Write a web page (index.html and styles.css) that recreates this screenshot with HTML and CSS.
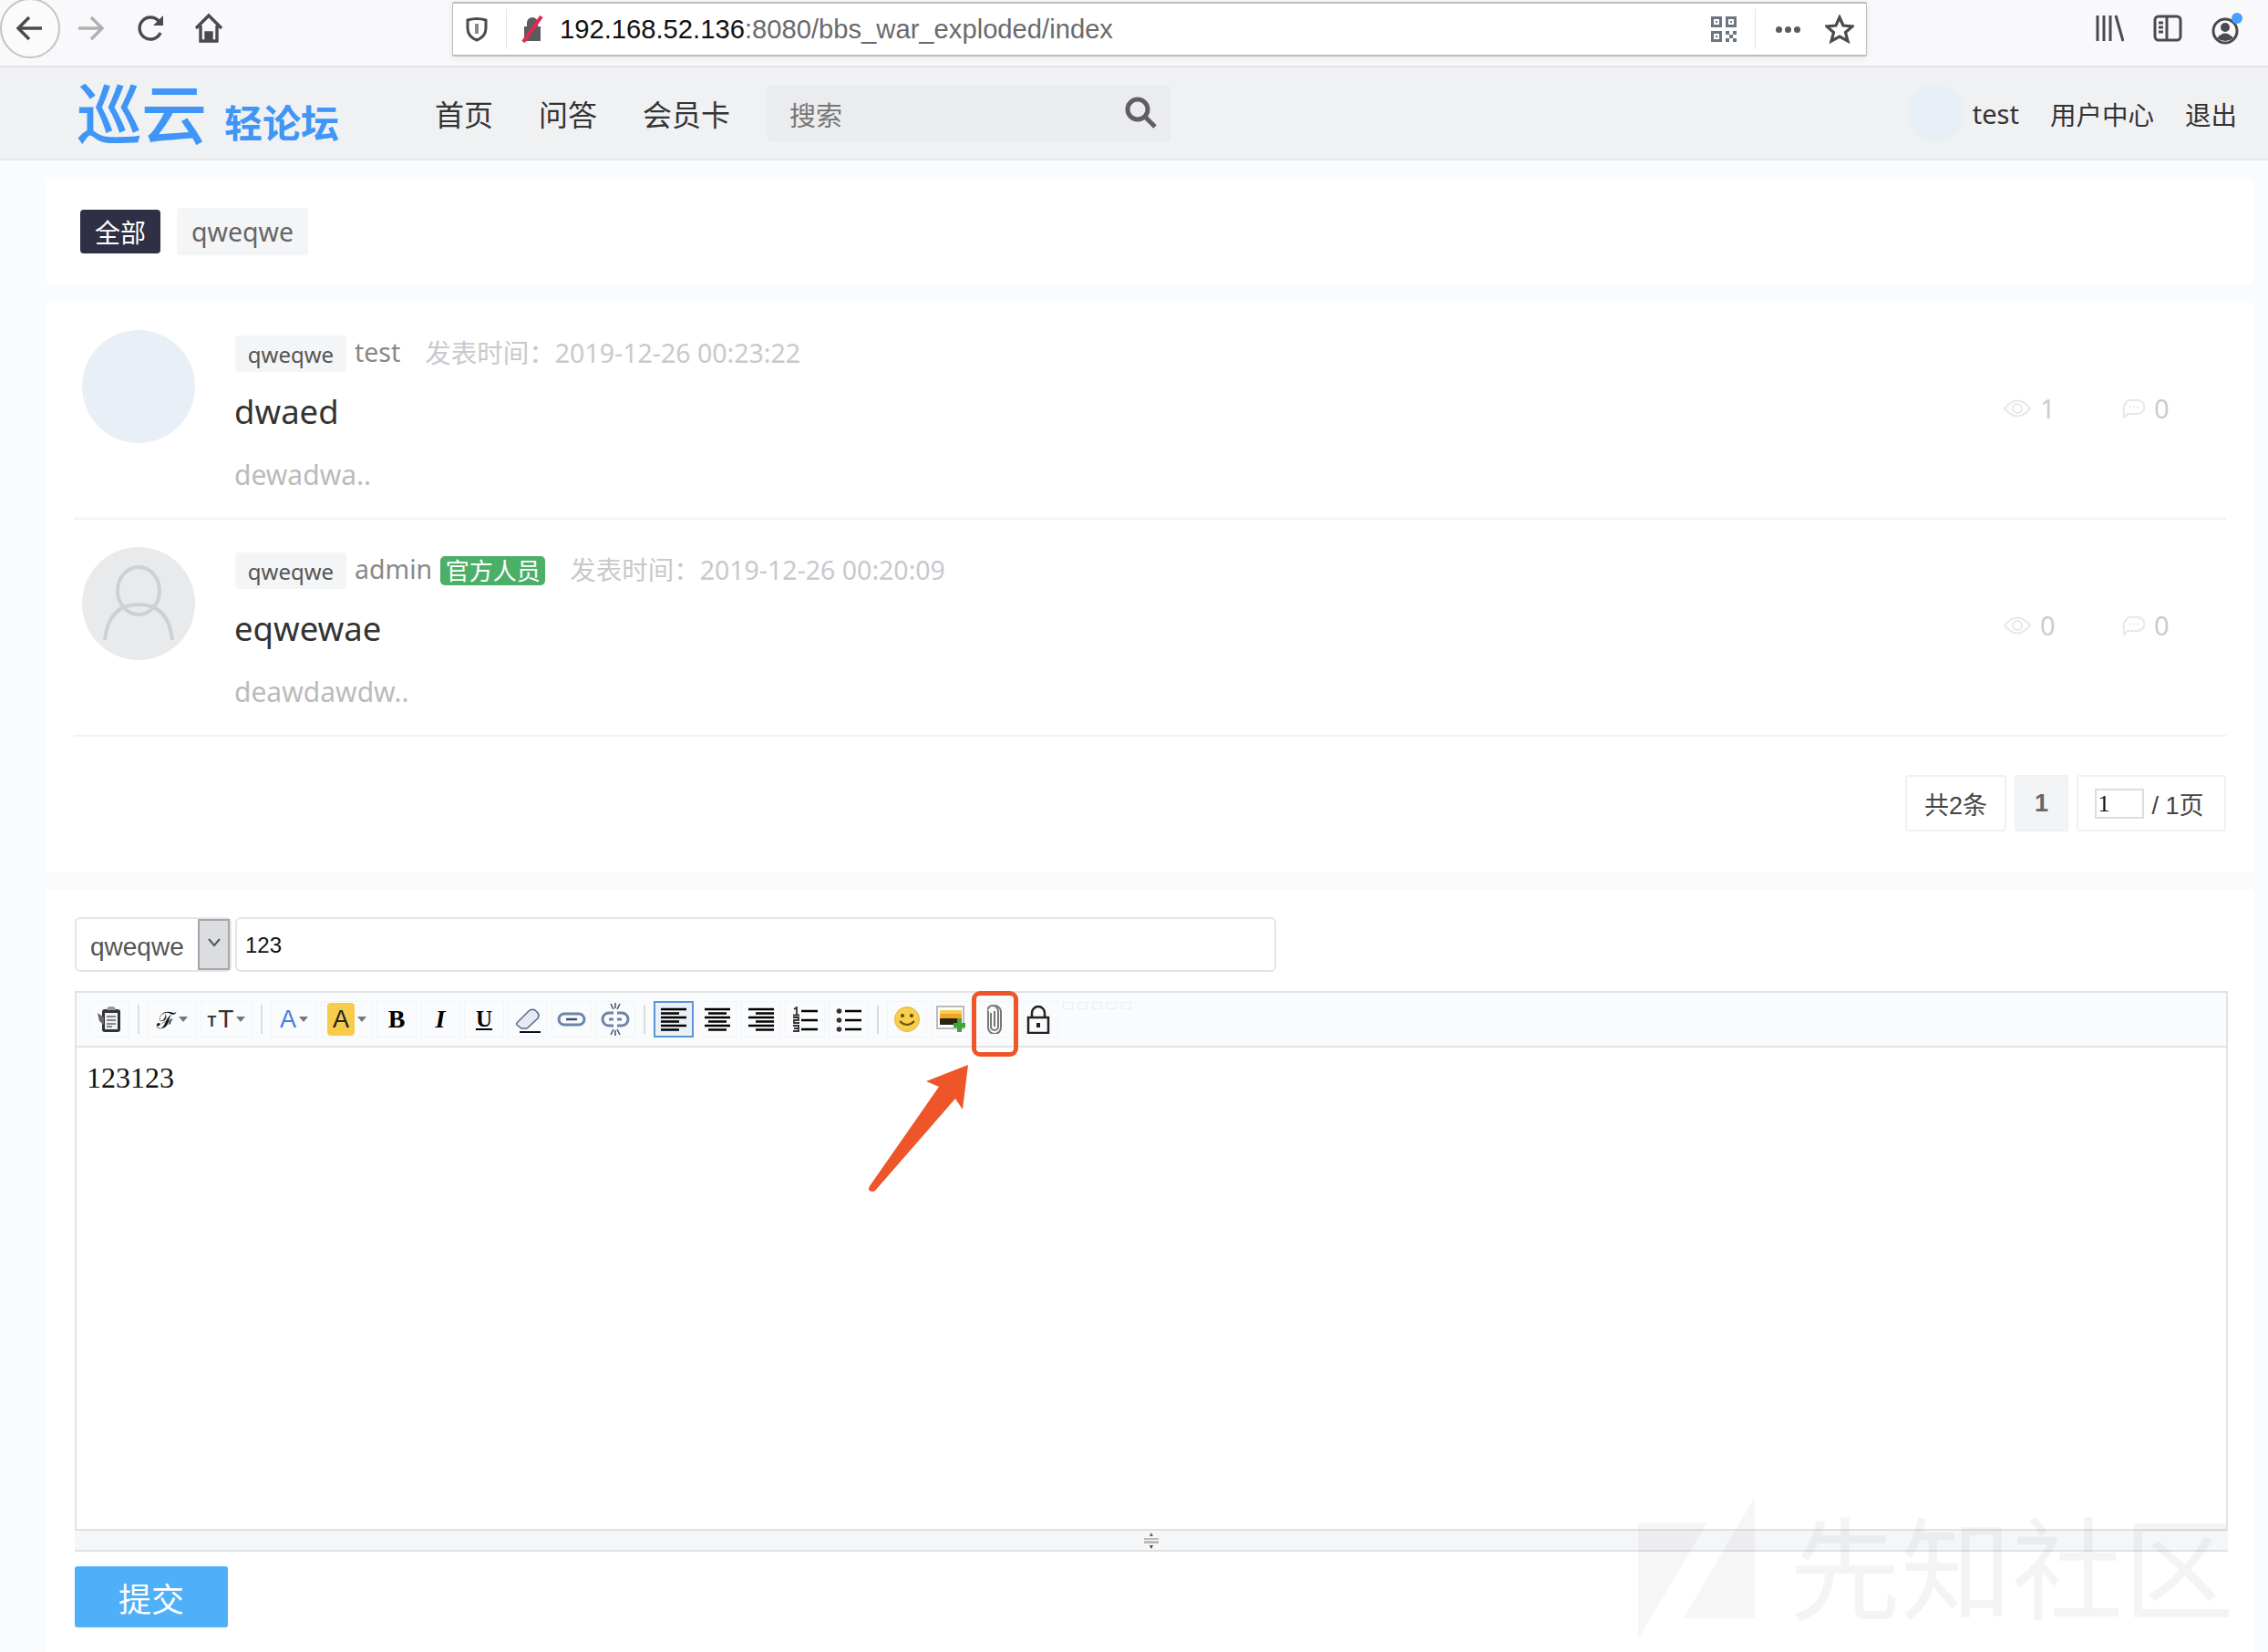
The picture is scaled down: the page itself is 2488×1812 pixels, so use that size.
FILE: index.html
```html
<!DOCTYPE html>
<html lang="zh-CN">
<head>
    <meta charset="UTF-8">
    <title>bbs index</title>
    <link rel="stylesheet" href="styles.css">
</head>
<body>
    <!-- browser chrome -->
    <div class="browser">
        <div class="back-btn">
            <svg width="34" height="34" viewBox="0 0 34 34" fill="none" stroke="#4a4a4f" stroke-width="3.4"><path d="M30 17H5M16 5L4 17l12 12"/></svg>
        </div>
        <svg class="fwd" width="34" height="34" viewBox="0 0 34 34" fill="none" stroke="#b1b1b3" stroke-width="3.4"><path d="M4 17h25M18 5l12 12-12 12"/></svg>
        <svg class="reload" width="32" height="34" viewBox="0 0 32 34" fill="none" stroke="#4a4a4f" stroke-width="3.4"><path d="M26 22a12 12 0 1 1-2-13l4 4"/><path d="M29 3v11H18" fill="#4a4a4f" stroke="none"/></svg>
        <svg class="home" width="32" height="34" viewBox="0 0 32 34" fill="none" stroke="#4a4a4f" stroke-width="3.4"><path d="M2 17L16 3l14 14M7 14v17h18V14"/><path d="M13 31v-9h6v9" fill="#4a4a4f"/></svg>
        <div class="urlbar">
            <svg class="shield" width="26" height="28" viewBox="0 0 26 28" fill="none" stroke="#4a4a4f" stroke-width="3"><path d="M3 4q10-3 20 0v9q0 9-10 13Q3 22 3 13z"/><path d="M13 8v11" stroke-width="4" stroke="#8a8a8e"/></svg>
            <i class="url-sep"></i>
            <svg class="nolock" width="28" height="30" viewBox="0 0 28 30"><path d="M8 12V8a6 6 0 0 1 12 0v4h3v16H5V12z" fill="#5c5c60"/><path d="M24 1L4 29" stroke="#e22850" stroke-width="4"/></svg>
            <div class="url"><b>192.168.52.136</b>:8080/bbs_war_exploded/index</div>
            <svg class="qr" width="30" height="30" viewBox="0 0 30 30" fill="#6d7680"><path d="M1 1h12v12H1zm3 3v6h6V4zM17 1h12v12H17zm3 3v6h6V4zM1 17h12v12H1zm3 3v6h6v-6z" fill-rule="evenodd"/><path d="M17 17h4v4h-4zM25 17h4v4h-4zM21 21h4v4h-4zM17 25h4v4h-4zM25 25h4v4h-4zM6 6h2v2H6zM22 6h2v2h-2zM6 22h2v2H6z"/></svg>
            <i class="url-sep url-sep-right"></i>
            <div class="dots"><i></i><i></i><i></i></div>
            <svg class="star" width="32" height="32" viewBox="0 0 32 32" fill="none" stroke="#4a4a4f" stroke-width="3.2"><path d="M16 3l4 9 10 1-7.5 6.6L25 29l-9-5-9 5 2.500-9.400L2 13l10-1z"/></svg>
        </div>
        <div class="browser-right">
            <svg width="32" height="30" viewBox="0 0 32 30" fill="none" stroke="#4a4a4f" stroke-width="3"><path d="M3 1v28M10 1v28M17 1v28M23 1l8 28"/></svg>
            <svg width="32" height="30" viewBox="0 0 32 30" fill="none" stroke="#4a4a4f" stroke-width="3"><rect x="2" y="2" width="28" height="26" rx="4"/><path d="M15 2v26M6 9h5M6 14h5M6 19h5"/></svg>
            <svg width="34" height="36" viewBox="0 0 34 36"><circle cx="15" cy="21" r="13" fill="none" stroke="#4a4a4f" stroke-width="3"/><circle cx="15" cy="17" r="5" fill="#4a4a4f"/><path d="M6 29q9-11 18 0q-9 6-18 0" fill="#4a4a4f"/><circle cx="28" cy="7" r="6" fill="#45a1ff"/></svg>
        </div>
    </div>

    <!-- site nav -->
    <div class="nav">
        <div class="logo"><span class="logo-big">巡云</span><span class="logo-small">轻论坛</span></div>
        <a class="nav-link">首页</a>
        <a class="nav-link">问答</a>
        <a class="nav-link">会员卡</a>
        <div class="search">
            <span>搜索</span>
            <svg width="36" height="36" viewBox="0 0 36 36" fill="none" stroke="#5f5f62" stroke-width="5"><circle cx="15" cy="15" r="11"/><path d="M23 23l11 11"/></svg>
        </div>
        <div class="nav-right">
            <div class="nav-avatar"></div>
            <a class="nav-user">test</a>
            <a class="nav-center">用户中心</a>
            <a class="nav-out">退出</a>
        </div>
    </div>

    <div class="main">
        <div class="card tags">
            <span class="tag-all">全部</span>
            <span class="tag-item">qweqwe</span>
        </div>

        <div class="card topics">
            <div class="topic">
                <div class="avatar"></div>
                <div class="topic-body">
                    <div class="meta">
                        <span class="cat">qweqwe</span>
                        <span class="author">test</span>
                        <span class="time">发表时间：2019-12-26 00:23:22</span>
                    </div>
                    <div class="title">dwaed</div>
                    <div class="desc">dewadwa..</div>
                </div>
                <div class="stats">
                    <div class="stat">
                        <svg width="30" height="20" viewBox="0 0 30 20" fill="none" stroke="#e8e8ea" stroke-width="2"><path d="M1 10q14-17 28 0q-14 17-28 0z"/><circle cx="15" cy="10" r="5"/></svg>
                        <span>1</span>
                    </div>
                    <div class="stat">
                        <svg width="26" height="22" viewBox="0 0 26 22" fill="none" stroke="#e8e8ea" stroke-width="2"><path d="M8 2h10a7 7 0 0 1 0 15H7l-4 4v-7Q1 8 8 2z"/><path d="M9 9.500h2M13 9.500h2M17 9.500h2"/></svg>
                        <span>0</span>
                    </div>
                </div>
            </div>
            <div class="topic">
                <div class="avatar avatar-default">
                    <svg width="124" height="124" viewBox="0 0 124 124" fill="none" stroke="#cfd0d2" stroke-width="4"><ellipse cx="62" cy="48" rx="23" ry="26"/><path d="M25 102q4-39 37-39t37 39"/></svg>
                </div>
                <div class="topic-body">
                    <div class="meta">
                        <span class="cat">qweqwe</span>
                        <span class="author">admin</span>
                        <span class="badge">官方人员</span>
                        <span class="time">发表时间：2019-12-26 00:20:09</span>
                    </div>
                    <div class="title">eqwewae</div>
                    <div class="desc">deawdawdw..</div>
                </div>
                <div class="stats">
                    <div class="stat">
                        <svg width="30" height="20" viewBox="0 0 30 20" fill="none" stroke="#e8e8ea" stroke-width="2"><path d="M1 10q14-17 28 0q-14 17-28 0z"/><circle cx="15" cy="10" r="5"/></svg>
                        <span>0</span>
                    </div>
                    <div class="stat">
                        <svg width="26" height="22" viewBox="0 0 26 22" fill="none" stroke="#e8e8ea" stroke-width="2"><path d="M8 2h10a7 7 0 0 1 0 15H7l-4 4v-7Q1 8 8 2z"/><path d="M9 9.500h2M13 9.500h2M17 9.500h2"/></svg>
                        <span>0</span>
                    </div>
                </div>
            </div>
            <div class="pager">
                <span class="page-box page-total">共2条</span>
                <span class="page-box page-current">1</span>
                <span class="page-box page-jump"><span class="page-input">1</span>/ 1页</span>
            </div>
        </div>

        <div class="card post">
            <div class="post-row">
                <div class="select">
                    <span>qweqwe</span>
                    <div class="select-btn"><svg width="16" height="10" viewBox="0 0 16 10" fill="none" stroke="#555" stroke-width="2"><path d="M2 1l6 7 6-7"/></svg></div>
                </div>
                <div class="title-input">123</div>
            </div>
            <div class="editor">
                <div class="toolbar">
                    <div class="tb">
                        <svg width="28" height="30" viewBox="0 0 28 30"><rect x="6" y="4" width="20" height="25" rx="3" fill="#333"/><rect x="9" y="8" width="14" height="18" fill="#eef1f4"/><path d="M11 12h10M11 16h10M11 20h10M11 23h6" stroke="#667" stroke-width="1.500"/><path d="M11 5q0-4 4-4h2q4 0 4 4" fill="#999"/><path d="M1 8l7 5v8L3 17z" fill="#666"/></svg>
                    </div>
                    <i class="tb-sep"></i>
                    <div class="tb tb-wide"><span class="t-font">ℱ</span><i class="caret"></i></div>
                    <div class="tb tb-wider"><span class="t-small">T</span><span class="t-big">T</span><i class="caret"></i></div>
                    <i class="tb-sep"></i>
                    <div class="tb tb-color"><span class="t-a t-blue">A</span><i class="caret"></i></div>
                    <div class="tb tb-wider"><span class="t-a t-hl">A</span><i class="caret"></i></div>
                    <div class="tb"><b class="t-b">B</b></div>
                    <div class="tb"><b class="t-i">I</b></div>
                    <div class="tb"><b class="t-u">U</b></div>
                    <div class="tb">
                        <svg width="30" height="30" viewBox="0 0 30 30"><path d="M3 19L16 6q3-3 7-1l3 3q2 3 0 6L14 25H8l-5-4q-1-1 0-2z" fill="#e6ebf3" stroke="#55688a" stroke-width="1.500"/><path d="M6 29h23" stroke="#111" stroke-width="2"/></svg>
                    </div>
                    <div class="tb">
                        <svg width="32" height="16" viewBox="0 0 32 16" fill="none" stroke="#6c85a8" stroke-width="3"><rect x="2" y="2" width="28" height="12" rx="6"/><path d="M10 8h12" stroke="#3e5270" stroke-width="2.500"/></svg>
                    </div>
                    <div class="tb">
                        <svg width="32" height="36" viewBox="0 0 32 36" fill="none" stroke="#6c85a8" stroke-width="3"><path d="M14 11H9a7 7 0 0 0 0 14h5M18 11h5a7 7 0 0 1 0 14h-5M9 18h5M18 18h5"/><path d="M11 1l3 6M21 1l-3 6M16 0v6M11 35l3-6M21 35l-3-6M16 36v-6" stroke="#3e5270" stroke-width="1.500"/></svg>
                    </div>
                    <i class="tb-sep"></i>
                    <div class="tb tb-active"><svg width="28" height="26" viewBox="0 0 28 26" stroke="#000" stroke-width="2.500"><path d="M0 2h28M0 6.500h20M0 11h28M0 15.500h20M0 20h28M0 24.500h20"/></svg></div>
                    <div class="tb"><svg width="28" height="26" viewBox="0 0 28 26" stroke="#000" stroke-width="2.500"><path d="M0 2h28M4 6.500h20M0 11h28M4 15.500h20M0 20h28M4 24.500h20"/></svg></div>
                    <div class="tb"><svg width="28" height="26" viewBox="0 0 28 26" stroke="#000" stroke-width="2.500"><path d="M0 2h28M8 6.500h20M0 11h28M8 15.500h20M0 20h28M8 24.500h20"/></svg></div>
                    <div class="tb"><svg width="28" height="28" viewBox="0 0 28 28"><path d="M10 5h18M10 15h18M10 25h18" stroke="#000" stroke-width="2.500"/><path d="M2 3l3-2v8M1 9.500h7M1 12h6v3H2v3h6M1 21h6v3H2M7 24v3H1" fill="none" stroke="#333" stroke-width="1.800"/></svg></div>
                    <div class="tb"><svg width="28" height="28" viewBox="0 0 28 28"><path d="M10 5h18M10 15h18M10 25h18" stroke="#000" stroke-width="2.500"/><circle cx="3.500" cy="5" r="2.800" fill="#333"/><circle cx="3.500" cy="15" r="2.800" fill="#333"/><circle cx="3.500" cy="25" r="2.800" fill="#333"/></svg></div>
                    <i class="tb-sep"></i>
                    <div class="tb"><svg width="30" height="30" viewBox="0 0 30 30"><circle cx="15" cy="15" r="13.500" fill="#f7cf4d" stroke="#e3b23a"/><circle cx="10" cy="11" r="2" fill="#5a4210"/><circle cx="20" cy="11" r="2" fill="#5a4210"/><path d="M7 17q8 8 16 0" fill="none" stroke="#6b4f14" stroke-width="2"/></svg></div>
                    <div class="tb"><svg width="32" height="30" viewBox="0 0 32 30"><rect x="1" y="1" width="29" height="24" fill="#fff" stroke="#bbb" stroke-width="2"/><rect x="4" y="5" width="24" height="16" fill="#f0a428"/><path d="M4 14h24v7H4z" fill="#2d2410"/><path d="M4 5h24v4H4z" fill="#f7cf4d"/><path d="M23 14h5v5h4v5h-4v5h-5v-5h-4v-5h4z" fill="#3fa53a"/></svg></div>
                    <div class="tb"><svg width="16" height="32" viewBox="0 0 16 32" fill="none" stroke="#777" stroke-width="2"><path d="M4 9v15a4 4 0 0 0 8 0V7a6 6 0 0 0-12 0"/><path d="M1 7v18a7 7 0 0 0 14 0V7a7 7 0 0 0-7-6M8 7v17"/></svg></div>
                    <div class="tb"><svg width="26" height="32" viewBox="0 0 26 32" fill="none" stroke="#222" stroke-width="2.500"><path d="M6 14V9a7 7 0 0 1 14 0v5"/><rect x="2" y="14" width="22" height="17"/><path d="M13 20v5" stroke-width="4"/></svg></div>
                    <div class="tb-empty"><i></i><i></i><i></i><i></i><i></i></div>
                </div>
                <div class="editor-body">123123</div>
                <div class="editor-status">
                    <svg width="18" height="20" viewBox="0 0 18 20"><path d="M9 1l2 4H7z" fill="#666"/><path d="M1 7h16v6H1z" fill="#bbb"/><path d="M1 9.500h16" stroke="#fff"/><path d="M9 19l2-4H7z" fill="#444"/></svg>
                </div>
            </div>
            <button class="submit">提交</button>
        </div>
    </div>

    <!-- annotation drawn on the screenshot -->
    <div class="mark-box"></div>
    <svg class="mark-arrow" width="120" height="150" viewBox="0 0 120 150"><path d="M112 3L66 21 80 27 4 136q-2 4 0 5 3 2 6 0L98 40l8 12z" fill="#ee5528"/></svg>

    <!-- watermark -->
    <div class="watermark">
        <svg width="130" height="160" viewBox="0 0 130 160" fill="#8a8a8a"><path d="M0 30h76L0 158z"/><path d="M128 2v133H50z"/></svg>
        <span>先知社区</span>
    </div>
</body>
</html>
```

FILE: styles.css
```css
* {
    box-sizing: border-box;
}
html, body {
    margin: 0;
    height: 100%;
}
body {
    width: 2488px;
    height: 1812px;
    overflow: hidden;
    position: relative;
    background: #fafbfd;
    font-family: "Noto Sans", "Noto Sans CJK SC", sans-serif;
    color: #333;
}
i {
    font-style: normal;
}

/* browser chrome */
.browser {
    height: 74px;
    background: #f9f9fb;
    border-bottom: 2px solid #e3e4e6;
    display: flex;
    align-items: center;
    padding-bottom: 10px;
}
.back-btn {
    width: 66px;
    height: 66px;
    border: 2px solid #c4c4c6;
    border-radius: 50%;
    display: flex;
    align-items: center;
    justify-content: center;
    flex-shrink: 0;
    background: #fbfbfc;
}
.fwd {
    margin-left: 16px;
}
.reload {
    margin-left: 34px;
}
.home {
    margin-left: 31px;
}
.urlbar {
    width: 1552px;
    height: 60px;
    margin-left: 251px;
    margin-top: 2px;
    background: #fff;
    border: 1px solid #bcbcbe;
    border-top-width: 2px;
    border-bottom-width: 2px;
    border-radius: 2px;
    box-shadow: 0 2px 8px rgba(0, 0, 0, .07);
    display: flex;
    align-items: center;
    padding-left: 13px;
}
.url-sep {
    width: 1px;
    height: 44px;
    background: #e3e3e5;
    margin: 0 14px 0 19px;
}
.url-sep-right {
    margin: 0 22px 0 14px;
}
.url {
    margin-left: 16px;
    flex: 1;
    font-family: "Liberation Sans", sans-serif;
    font-size: 29.200px;
    color: #6a6a6d;
    white-space: nowrap;
}
.url b {
    font-weight: normal;
    color: #111;
}
.qr {
    margin-right: 5px;
}
.dots {
    display: flex;
    gap: 3px;
    margin-right: 27px;
}
.dots i {
    width: 7px;
    height: 7px;
    border-radius: 50%;
    background: #5b5b5f;
}
.star {
    margin-right: 13px;
}
.browser-right {
    margin-left: auto;
    display: flex;
    align-items: center;
    gap: 32px;
    margin-right: 28px;
}

/* site nav */
.nav {
    height: 102px;
    background: #f0f1f3;
    border-bottom: 2px solid #e5e6e8;
    display: flex;
    align-items: center;
    padding-left: 84px;
}
.logo {
    width: 393px;
    display: flex;
    align-items: flex-end;
    color: #3f96f7;
    white-space: nowrap;
    height: 66px;
    flex-shrink: 0;
}
.logo-big {
    font-size: 72px;
    line-height: 66px;
    letter-spacing: -1px;
    font-weight: 500;
}
.logo-small {
    font-size: 42px;
    line-height: 44px;
    font-weight: 700;
    margin-left: 20px;
}
.nav-link {
    font-size: 32px;
    color: #333;
    margin-right: 50px;
    white-space: nowrap;
}
.search {
    width: 442px;
    height: 61px;
    margin-left: -9px;
    background: #ebecee;
    border: 1px solid #e8e9eb;
    border-radius: 4px;
    display: flex;
    align-items: center;
    justify-content: space-between;
    padding: 2px 14px 0 23px;
    color: #777;
    font-size: 29px;
}
.search svg {
    margin-top: -4px;
}
.nav-right {
    margin-left: auto;
    display: flex;
    align-items: center;
    font-size: 29px;
    color: #333;
    padding-right: 34px;
    white-space: nowrap;
}
.nav-avatar {
    width: 63px;
    height: 64px;
    border-radius: 50%;
    background: #e9eff6;
    margin-right: 9px;
}
.nav-center {
    margin-left: 34px;
    font-size: 28.500px;
}
.nav-out {
    margin-left: 34px;
    font-size: 28.500px;
}

/* cards */
.main {
    padding: 20px 16px 0 51px;
    display: flex;
    flex-direction: column;
    gap: 20px;
}
.card {
    background: #fff;
    box-shadow: 0 1px 6px rgba(0, 0, 0, .012);
}
.tags {
    height: 116px;
    padding: 32px 0 0 37px;
    display: flex;
    align-items: flex-start;
    gap: 19px;
}
.tag-all {
    width: 88px;
    height: 48px;
    margin-top: 2px;
    background: #2f3045;
    color: #fff;
    border-radius: 4px;
    font-size: 28px;
    display: flex;
    align-items: center;
    justify-content: center;
}
.tag-item {
    width: 144px;
    height: 52px;
    background: #f4f5f7;
    border-radius: 4px;
    color: #666;
    font-size: 28.500px;
    display: flex;
    align-items: center;
    justify-content: center;
    margin-left: -1px;
}

.topics {
    height: 624px;
    padding: 0 30px;
}
.topic {
    height: 238px;
    display: flex;
    align-items: flex-start;
    padding-top: 30px;
    border-bottom: 2px solid #f1f2f4;
}
.avatar {
    width: 124px;
    height: 124px;
    margin-left: 9px;
    border-radius: 50%;
    background: #e9eff6;
    flex-shrink: 0;
}
.avatar-default {
    background: #e9eaec;
}
.avatar-default svg {
    display: block;
}
.topic-body {
    margin-left: 44px;
    flex: 1;
}
.meta {
    display: flex;
    align-items: center;
    height: 40px;
    margin-top: 6px;
    font-size: 28.500px;
    white-space: nowrap;
}
.cat {
    width: 122px;
    height: 40px;
    background: #f4f5f7;
    border-radius: 4px;
    color: #555;
    font-size: 24px;
    display: flex;
    align-items: center;
    justify-content: center;
    margin-right: 9px;
}
.author {
    color: #888;
    padding-bottom: 5px;
}
.badge {
    width: 115px;
    height: 32px;
    margin-left: 9px;
    background: #4caf68;
    color: #fff;
    border-radius: 5px;
    font-size: 26px;
    line-height: 32px;
    text-align: center;
}
.time {
    color: #c8c9cc;
    margin-left: 27px;
    padding-bottom: 5px;
}
.title {
    font-size: 36.500px;
    line-height: 50px;
    margin: 18px 0 0 -1px;
    color: #333;
}
.desc {
    font-size: 30px;
    line-height: 40px;
    margin: 25px 0 0 -1px;
    color: #bbb;
}
.stats {
    display: flex;
    gap: 14px;
    margin-top: 66px;
}
.stat {
    width: 115px;
    display: flex;
    align-items: center;
    gap: 10px;
    font-size: 29px;
    color: #ccc;
}

.pager {
    display: flex;
    justify-content: flex-end;
    gap: 9px;
    margin-top: 42px;
    font-size: 27px;
    color: #444;
}
.page-box {
    height: 62px;
    border: 2px solid #f0f1f3;
    border-radius: 3px;
    display: flex;
    align-items: center;
    justify-content: center;
    font-family: "Liberation Sans", "Noto Sans CJK SC", sans-serif;
}
.page-total {
    width: 111px;
}
.page-current {
    width: 59px;
    background: #f3f4f6;
    font-weight: 700;
    color: #666;
}
.page-jump {
    width: 164px;
    gap: 8px;
    padding-right: 6px;
}
.page-input {
    width: 54px;
    height: 33px;
    margin-left: 2px;
    border: 2px solid #ddd;
    color: #111;
    font-size: 26px;
    line-height: 30px;
    padding-left: 1px;
    font-family: "Liberation Serif", serif;
}

/* post form */
.post {
    height: 836px;
    padding: 30px 0 0 31px;
}
.post-row {
    display: flex;
    gap: 4px;
}
.select {
    width: 172px;
    height: 60px;
    border: 2px solid #e4e5e7;
    border-radius: 6px;
    display: flex;
    align-items: center;
    justify-content: space-between;
    padding-left: 15px;
    font-family: "Liberation Sans", sans-serif;
    font-size: 28px;
    color: #555;
}
.select > span {
    padding-top: 5px;
}
.select-btn {
    width: 35px;
    height: 56px;
    background: #dcdde0;
    border: 2px solid #a6a6a8;
    display: flex;
    align-items: center;
    justify-content: center;
    padding-bottom: 4px;
}
.title-input {
    width: 1142px;
    height: 60px;
    border: 2px solid #e4e5e7;
    border-radius: 6px;
    padding-left: 9px;
    font-family: "Liberation Sans", sans-serif;
    font-size: 24px;
    line-height: 58px;
    color: #111;
}
.editor {
    width: 2362px;
    margin-top: 21px;
    border: 2px solid #e2e3e5;
    border-bottom: none;
}
.toolbar {
    height: 60px;
    background: #fafbfd;
    border-bottom: 2px solid #e2e3e5;
    display: flex;
    align-items: center;
    gap: 4px;
    padding-left: 14px;
}
.tb {
    width: 44px;
    height: 40px;
    border: 1px solid #f3f4f7;
    display: flex;
    align-items: center;
    justify-content: center;
    flex-shrink: 0;
    font-family: "Liberation Serif", serif;
}
.tb-wide {
    width: 54px;
}
.tb-wider {
    width: 57px;
}
.tb-color {
    width: 51px;
}
.tb-active {
    background: #eaf0f7;
    border: 2px solid #5b95d9;
}
.tb-sep {
    width: 2px;
    height: 32px;
    margin: 0 5px;
    background: #dcdde0;
    flex-shrink: 0;
}
.caret {
    width: 0;
    height: 0;
    margin-left: 3px;
    border: 5px solid transparent;
    border-top: 6px solid #777;
    border-bottom: none;
}
.t-font {
    font-family: "DejaVu Serif", serif;
    font-size: 25px;
    color: #111;
}
.t-small {
    font-family: "Liberation Sans", sans-serif;
    font-size: 16px;
    color: #333;
    margin-top: 6px;
    margin-right: 2px;
    font-weight: 700;
}
.t-big {
    font-family: "Liberation Sans", sans-serif;
    font-size: 28px;
    color: #333;
}
.t-a {
    font-family: "Liberation Sans", sans-serif;
    font-size: 27px;
}
.t-blue {
    color: #3f7de8;
}
.t-hl {
    width: 30px;
    height: 36px;
    background: #f7cc4b;
    border-radius: 4px;
    color: #222;
    text-align: center;
    line-height: 36px;
}
.t-b, .t-i, .t-u {
    font-size: 28px;
    color: #000;
    font-family: "Liberation Serif", serif;
}
.t-i {
    font-style: italic;
}
.t-u {
    text-decoration: underline;
    text-underline-offset: 2px;
    text-decoration-thickness: 2px;
    font-size: 25px;
}
.tb-empty {
    display: flex;
    gap: 5px;
    align-self: flex-start;
    margin: 10px 0 0 1px;
}
.tb-empty i {
    width: 11px;
    height: 8px;
    border: 1px solid #eceef1;
}
.editor-body {
    height: 528px;
    padding: 13px 11px;
    background: #fff;
    font-family: "Liberation Serif", serif;
    font-size: 32px;
    line-height: 40px;
    color: #111;
}
.editor-status {
    height: 25px;
    background: #f5f6f8;
    border-top: 2px solid #e0e1e3;
    border-bottom: 2px solid #e0e1e3;
    margin: 0 -2px 0 -2px;
    display: flex;
    align-items: center;
    justify-content: center;
}
.submit {
    display: block;
    width: 168px;
    height: 67px;
    margin-top: 16px;
    border: none;
    border-radius: 3px;
    background: #4eb0f9;
    color: #fff;
    font-family: "Noto Sans CJK SC", sans-serif;
    font-size: 36px;
}

/* overlays */
.mark-box {
    position: absolute;
    left: 1066px;
    top: 1087px;
    width: 51px;
    height: 72px;
    border: 5px solid #ee5528;
    border-radius: 9px;
}
.mark-arrow {
    position: absolute;
    left: 950px;
    top: 1165px;
}
.watermark {
    position: absolute;
    left: 1797px;
    top: 1640px;
    display: flex;
    align-items: flex-start;
    gap: 36px;
    opacity: .07;
    pointer-events: none;
}
.watermark span {
    font-size: 122px;
    line-height: 160px;
    color: #777;
    white-space: nowrap;
}
```
